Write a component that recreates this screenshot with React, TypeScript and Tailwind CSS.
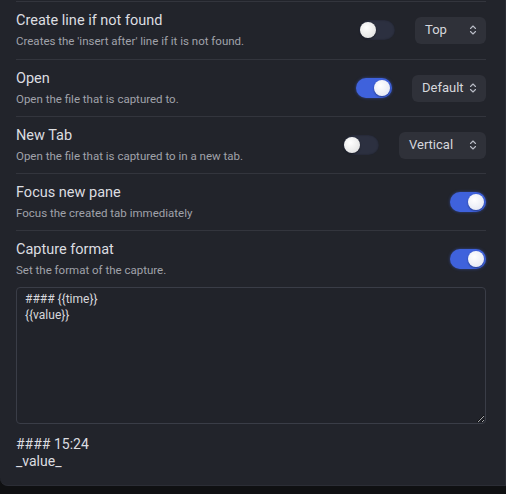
import { useState } from "react";

type Row = {
  title: string;
  desc: string;
  on: boolean;
  select?: { value: string; width: string };
};

const ROWS: Row[] = [
  {
    title: "Create line if not found",
    desc: "Creates the 'insert after' line if it is not found.",
    on: false,
    select: { value: "Top", width: "w-[71px]" },
  },
  {
    title: "Open",
    desc: "Open the file that is captured to.",
    on: true,
    select: { value: "Default", width: "w-[74px]" },
  },
  {
    title: "New Tab",
    desc: "Open the file that is captured to in a new tab.",
    on: false,
    select: { value: "Vertical", width: "w-[87px]" },
  },
  { title: "Focus new pane", desc: "Focus the created tab immediately", on: true },
  { title: "Capture format", desc: "Set the format of the capture.", on: true },
];

function Toggle({ on }: { on: boolean }) {
  return (
    <div
      className={
        on
          ? "relative h-5 w-9 rounded-full bg-[#3f62dc] shadow-[0_0_3px_rgba(63,98,220,0.6)]"
          : "relative h-5 w-9 rounded-full bg-[#2c3040] shadow-[inset_0_0_2px_rgba(0,0,0,0.4)]"
      }
    >
      <span
        className={
          on
            ? "absolute top-[2px] right-[2px] h-4 w-4 rounded-full bg-[radial-gradient(circle_at_40%_35%,#ffffff,#dfe3f0)] shadow-[0_1px_2px_rgba(0,0,0,0.4)]"
            : "absolute top-[2px] left-[1px] h-4 w-4 rounded-full bg-[radial-gradient(circle_at_40%_35%,#ffffff,#dcdcdc)] shadow-[0_1px_2px_rgba(0,0,0,0.4)]"
        }
      />
    </div>
  );
}

function Dropdown({ value, width }: { value: string; width: string }) {
  return (
    <div
      className={`flex h-[27px] ${width} items-center justify-between rounded-md bg-[#2f3139] pl-[10px] pr-[9px] text-[13px] text-[#d6d7dc]`}
    >
      <span>{value}</span>
      <svg width="8" height="12" viewBox="0 0 8 12" fill="none" stroke="#b9bcc6" strokeWidth="1.1" strokeLinecap="round" strokeLinejoin="round">
        <path d="M1.5 4.5 L4 2 L6.5 4.5" />
        <path d="M1.5 7.5 L4 10 L6.5 7.5" />
      </svg>
    </div>
  );
}

export default function App() {
  const [format, setFormat] = useState("#### {{time}}\n{{value}}");

  return (
    <div className="min-h-[494px] bg-[#0f1012] font-['Roboto',sans-serif]">
      <div className="h-[486px] rounded-bl-lg border-r border-b border-[#2b2d35] bg-[#22242b] pt-[1px] pl-4 pr-[19px]">
        {ROWS.map((row, i) => (
          <div
            key={row.title}
            className={`flex items-center border-t border-[#33353d] pt-[9px] ${i === 0 ? "pb-[10px]" : "pb-[9px]"}`}
          >
            <div className="flex-1">
              <div className="text-[14.5px] leading-5 text-[#dcdde0]">{row.title}</div>
              <div className="mt-[2px] text-[11.5px] leading-4 text-[#a0a2aa]">{row.desc}</div>
            </div>
            <div className="flex items-center gap-5">
              <Toggle on={row.on} />
              {row.select && <Dropdown value={row.select.value} width={row.select.width} />}
            </div>
          </div>
        ))}

        <textarea
          value={format}
          onChange={(e) => setFormat(e.target.value)}
          className="block h-[137px] w-full resize-y rounded border border-[#3a3d47] bg-[#21232a] px-2 pt-[3px] text-[12px] leading-4 text-[#d6d7dc] outline-none"
        />

        <div className="mt-[12px] text-[14px] leading-[17px] text-[#dcdde0]">
          <div>#### 15:24</div>
          <div>_value_</div>
        </div>
      </div>
    </div>
  );
}
